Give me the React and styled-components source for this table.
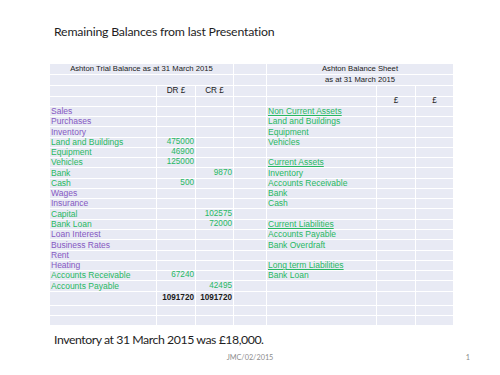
import React from "react";
import styled, { createGlobalStyle } from "styled-components";

const Global = createGlobalStyle`
  html, body { margin: 0; padding: 0; background: #fff; }
  body { font-family: "Liberation Sans", Arial, sans-serif; }
`;

const Page = styled.div`
  width: 500px;
  height: 375px;
  display: flex;
  flex-direction: column;
  background: #fff;
  overflow: hidden;
`;

const Title = styled.h1`
  margin: 24px 0 0 54px;
  font-family: Lato, "Open Sans", sans-serif;
  font-weight: 400;
  font-size: 12.3px;
  letter-spacing: -0.2px;
  line-height: 16px;
  color: #1e1e1e;
`;

const Table = styled.div`
  margin: 24px 0 0 50px;
  width: 403px;
  display: grid;
  grid-template-columns: 106px 38px 37px 32px 109px 38px 37px;
  grid-template-rows:
    10px 10px 10px 9px
    9px 9px 10px 9px 9px 9px 10px 9px 9px 9px 10px 9px 9px 10px 9px 9px 9px 10px
    13px 9px 9px;
  gap: 1px;
  background: #fff;
`;

const Cell = styled.div`
  background: #e8eaf4;
  grid-column: ${(p) => (p.$span ? `span ${p.$span}` : "auto")};
  display: flex;
  align-items: center;
  justify-content: ${(p) =>
    p.$align === "right" ? "flex-end" : p.$align === "center" ? "center" : "flex-start"};
  padding: 0 ${(p) => (p.$align === "right" ? "1px" : "0")} 0 ${(p) => (p.$align === "left" || !p.$align ? "1px" : "0")};
  font-size: ${(p) => p.$size || 8.5}px;
  line-height: 1;
  white-space: nowrap;
  overflow: hidden;
  color: ${(p) => (p.$tone === "purple" ? "#8558c2" : p.$tone === "green" ? "#27b863" : "#1a1a1a")};
  font-weight: ${(p) => (p.$bold ? 700 : 400)};
  text-decoration: ${(p) => (p.$under ? "underline" : "none")};
`;

const Note = styled.p`
  margin: 5.5px 0 0 54px;
  font-family: Lato, "Open Sans", sans-serif;
  font-size: 12.3px;
  letter-spacing: -0.45px;
  line-height: 18px;
  color: #1e1e1e;
`;

const Footer = styled.div`
  margin-top: 4px;
  display: grid;
  grid-template-columns: 1fr auto 1fr;
  align-items: center;
  font-family: Lato, "Open Sans", sans-serif;
  font-size: 7.3px;
  line-height: 10px;
  color: #8c8c8c;
`;

const FooterMid = styled.span`
  grid-column: 2;
`;

const FooterNum = styled.span`
  text-align: right;
  padding-right: 30px;
`;

const rows = [
  ["Sales", "purple", "", "", "Non Current Assets", true],
  ["Purchases", "purple", "", "", "Land and Buildings"],
  ["Inventory", "purple", "", "", "Equipment"],
  ["Land and Buildings", "green", "475000", "", "Vehicles"],
  ["Equipment", "green", "46900", "", ""],
  ["Vehicles", "green", "125000", "", "Current Assets", true],
  ["Bank", "green", "", "9870", "Inventory"],
  ["Cash", "green", "500", "", "Accounts Receivable"],
  ["Wages", "purple", "", "", "Bank"],
  ["Insurance", "purple", "", "", "Cash"],
  ["Capital", "green", "", "102575", ""],
  ["Bank Loan", "green", "", "72000", "Current Liabilities", true],
  ["Loan Interest", "purple", "", "", "Accounts Payable"],
  ["Business Rates", "purple", "", "", "Bank Overdraft"],
  ["Rent", "purple", "", "", ""],
  ["Heating", "purple", "", "", "Long term Liabilities", true],
  ["Accounts Receivable", "green", "67240", "", "Bank Loan"],
  ["Accounts Payable", "green", "", "42495", ""],
];

export default function App() {
  return (
    <>
      <Global />
      <Page>
        <Title>Remaining Balances from last Presentation</Title>
        <Table>
          <Cell $span={3} $align="center" $size={7.7}>Ashton Trial Balance as at 31 March 2015</Cell>
          <Cell />
          <Cell $span={3} $align="center" $size={7.7}>Ashton Balance Sheet</Cell>

          <Cell $span={3} />
          <Cell />
          <Cell $span={3} $align="center" $size={7.7}>as at 31 March 2015</Cell>

          <Cell />
          <Cell $align="center" $size={8.2}>DR £</Cell>
          <Cell $align="center" $size={8.2}>CR £</Cell>
          <Cell />
          <Cell />
          <Cell />
          <Cell />

          <Cell />
          <Cell />
          <Cell />
          <Cell />
          <Cell />
          <Cell $align="center" $size={8.2}>£</Cell>
          <Cell $align="center" $size={8.2}>£</Cell>

          {rows.map(([label, tone, dr, cr, right, under], i) => (
            <React.Fragment key={i}>
              <Cell $tone={tone}>{label}</Cell>
              <Cell $tone="green" $align="right" $size={8.2}>{dr}</Cell>
              <Cell $tone="green" $align="right" $size={8.2}>{cr}</Cell>
              <Cell />
              <Cell $tone="green" $under={under}>{right}</Cell>
              <Cell />
              <Cell />
            </React.Fragment>
          ))}

          <Cell />
          <Cell $bold $align="right" $size={8.2}>1091720</Cell>
          <Cell $bold $align="right" $size={8.2}>1091720</Cell>
          <Cell />
          <Cell />
          <Cell />
          <Cell />

          {Array.from({ length: 14 }).map((_, i) => (
            <Cell key={`b${i}`} />
          ))}
        </Table>
        <Note>Inventory at 31 March 2015 was £18,000.</Note>
        <Footer>
          <FooterMid>JMC/02/2015</FooterMid>
          <FooterNum>1</FooterNum>
        </Footer>
      </Page>
    </>
  );
}
